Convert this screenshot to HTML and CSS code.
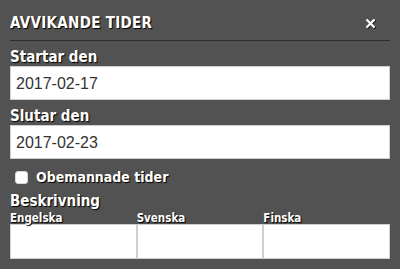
FILE: index.html
```html
<!DOCTYPE html>
<html lang="sv">
<head>
<meta charset="utf-8">
<title>Avvikande tider</title>
<link rel="stylesheet" href="styles.css">
</head>
<body>
<div class="dialog">
  <div class="header">
    <h1 class="title">AVVIKANDE TIDER</h1>
    <button class="close" type="button" aria-label="Stäng">
      <svg width="9" height="9" viewBox="0 0 9 9"><path d="M1.2 1.2 L7.8 7.8 M7.8 1.2 L1.2 7.8" stroke="#fff" stroke-width="2.2" stroke-linecap="square"/></svg>
    </button>
  </div>
  <div class="body">
    <label class="label">Startar den</label>
    <div class="field">2017-02-17</div>
    <label class="label">Slutar den</label>
    <div class="field">2017-02-23</div>
    <label class="check-row">
      <span class="checkbox"></span>
      <span class="check-text">Obemannade tider</span>
    </label>
    <div class="label label-desc">Beskrivning</div>
    <div class="langs">
      <div class="lang">
        <div class="small-label">Engelska</div>
        <div class="area"></div>
      </div>
      <div class="lang">
        <div class="small-label">Svenska</div>
        <div class="area"></div>
      </div>
      <div class="lang">
        <div class="small-label">Finska</div>
        <div class="area"></div>
      </div>
    </div>
  </div>
</div>
</body>
</html>
```
FILE: styles.css
```css
html, body {
  margin: 0;
  padding: 0;
  background: #525252;
}
body {
  width: 400px;
  height: 269px;
  overflow: hidden;
  font-family: "Liberation Sans Narrow", "DejaVu Sans Condensed", "Liberation Sans", sans-serif;
  color: #fff;
}
.dialog {
  padding: 0 10px;
}
.header {
  display: flex;
  justify-content: space-between;
  align-items: center;
  padding-top: 13px;
  padding-bottom: 7px;
  border-bottom: 1px solid #2e2e2e;
}
.title {
  margin: 0;
  font-size: 15px;
  line-height: 20px;
  font-weight: bold;
  text-shadow: 1px 1px 1px #000;
  letter-spacing: 0.3px;
}
.close {
  margin: 0 15px 0 0;
  padding: 0;
  border: 0;
  background: none;
  width: 9px;
  height: 9px;
  display: flex;
  filter: drop-shadow(1px 1px 0 rgba(0,0,0,0.6));
}
.body {
  padding-top: 8px;
  display: flex;
  flex-direction: column;
}
.label {
  display: block;
  font-size: 15px;
  line-height: 16px;
  font-weight: bold;
  text-shadow: 1px 1px 1px #000;
  margin-bottom: 1px;
}
.field {
  box-sizing: border-box;
  width: 100%;
  height: 34px;
  margin: 0 0 8px 0;
  padding: 1px 5px 0 5px;
  border: 1px solid #cfcfcf;
  background: #fff;
  font-family: "Liberation Sans", Arial, sans-serif;
  font-size: 16px;
  line-height: 31px;
  color: #333;
}
.check-row {
  display: flex;
  align-items: center;
  gap: 8px;
  height: 16px;
  margin-top: 2px;
  padding-left: 5px;
}
.checkbox {
  width: 13px;
  height: 13px;
  box-sizing: border-box;
  background: #fff;
  border: 1px solid #d8d8d8;
  border-radius: 3px;
}
.check-text {
  font-size: 14px;
  line-height: 16px;
  font-weight: bold;
  text-shadow: 1px 1px 1px #000;
}
.label-desc {
  margin-top: 8px;
  margin-bottom: 3px;
}
.langs {
  display: grid;
  grid-template-columns: 1fr 1fr 1fr;
}
.small-label {
  font-size: 11.5px;
  line-height: 12px;
  font-weight: bold;
  text-shadow: 1px 1px 1px #000;
}
.area {
  box-sizing: border-box;
  height: 35px;
  background: #fff;
  border: 1px solid #cfcfcf;
}
```
